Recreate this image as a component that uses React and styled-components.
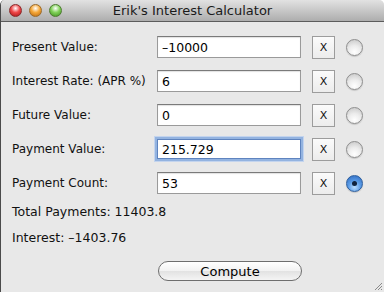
import styled, { createGlobalStyle } from "styled-components";

const GlobalStyle = createGlobalStyle`
	html, body {
		margin: 0;
		padding: 0;
		background: #ffffff;
	}
	body {
		font-family: "DejaVu Sans", "Liberation Sans", sans-serif;
	}
`;

const Window = styled.div`
	width: 384px;
	height: 292px;
	display: flex;
	flex-direction: column;
	background: #e8e8e8;
	border-radius: 5px 5px 0 0;
	overflow: hidden;
	box-sizing: border-box;
	border-left: 1px solid #4a4a4a;
	position: relative;
`;

const TitleBar = styled.div`
	height: 21px;
	flex: none;
	display: flex;
	align-items: center;
	padding-left: 8px;
	background: linear-gradient(#e2e2e2, #adadad);
	border-bottom: 1px solid #5c5c5c;
	position: relative;
`;

const Light = styled.span`
	width: 13px;
	height: 13px;
	border-radius: 50%;
	margin-right: 7px;
	box-sizing: border-box;
	border: 1px solid ${({ edge }) => edge};
	background: radial-gradient(circle at 50% 30%, #ffffff 0, ${({ hue }) => hue} 45%, ${({ deep }) => deep} 100%);
`;

const Title = styled.div`
	position: absolute;
	left: 0;
	right: 0;
	top: 0;
	height: 21px;
	line-height: 21px;
	text-align: center;
	font-size: 13px;
	color: #1a1a1a;
	pointer-events: none;
`;

const Content = styled.div`
	flex: 1;
	display: flex;
	flex-direction: column;
	padding: 14px 0 0 11px;
`;

const Rows = styled.div`
	display: flex;
	flex-direction: column;
	gap: 12px;
`;

const Row = styled.div`
	display: flex;
	align-items: center;
	height: 22px;
`;

const Label = styled.div`
	width: 145px;
	font-size: 12px;
	color: #111;
`;

const Field = styled.div`
	width: 144px;
	height: ${({ focused }) => (focused ? "20px" : "22px")};
	box-sizing: border-box;
	background: #ffffff;
	border: 1px solid ${({ focused }) => (focused ? "#5f84bf" : "#9a9a9a")};
	border-top-color: ${({ focused }) => (focused ? "#5f84bf" : "#7a7a7a")};
	box-shadow: ${({ focused }) =>
		focused ? "0 0 0 2px #93b3e0, 0 0 0 3px #c3d4ee" : "inset 0 1px 1px rgba(0,0,0,0.12)"};
	margin: ${({ focused }) => (focused ? "1px 0" : "0")};
	font-size: 12.5px;
	color: #000;
	display: flex;
	align-items: center;
	padding-left: 4px;
`;

const ClearButton = styled.div`
	width: 23px;
	height: 23px;
	margin-left: 11px;
	box-sizing: border-box;
	border: 1px solid #9c9c9c;
	background: linear-gradient(#fbfbfb, #ececec);
	display: flex;
	align-items: center;
	justify-content: center;
	font-size: 11px;
	color: #111;
`;

const Radio = styled.span`
	width: 17px;
	height: 17px;
	margin-left: 11px;
	border-radius: 50%;
	box-sizing: border-box;
	display: flex;
	align-items: center;
	justify-content: center;
	border: 1px solid ${({ checked }) => (checked ? "#2c5d9c" : "#8e8e8e")};
	background: ${({ checked }) =>
		checked
			? "radial-gradient(circle at 50% 75%, #b9ddff 0, #5b9ce6 45%, #2a67bf 100%)"
			: "radial-gradient(circle at 50% 80%, #ffffff 0, #ececec 45%, #c4c4c4 100%)"};
	box-shadow: 0 1px 1px rgba(0, 0, 0, 0.15);
`;

const Dot = styled.span`
	width: 5px;
	height: 5px;
	border-radius: 50%;
	background: #10233d;
`;

const Summary = styled.div`
	font-size: 12.5px;
	color: #111;
	height: 16px;
	line-height: 16px;
	margin-top: ${({ gap }) => gap}px;
`;

const ButtonRow = styled.div`
	display: flex;
	padding-left: 146px;
	margin-top: 15px;
`;

const Compute = styled.div`
	width: 144px;
	height: 20px;
	box-sizing: border-box;
	border: 1px solid #6e6e6e;
	border-radius: 10px;
	background: linear-gradient(#ffffff, #f2f2f2 50%, #e2e2e2 51%, #f4f4f4);
	display: flex;
	align-items: center;
	justify-content: center;
	font-size: 13px;
	color: #000;
`;

const Grip = styled.svg`
	position: absolute;
	right: 1px;
	bottom: 1px;
`;

const fields = [
	{ label: "Present Value:", value: "\u201310000" },
	{ label: "Interest Rate: (APR %)", value: "6" },
	{ label: "Future Value:", value: "0" },
	{ label: "Payment Value:", value: "215.729", focused: true },
	{ label: "Payment Count:", value: "53", checked: true },
];

export default function App() {
	return (
		<>
			<GlobalStyle />
			<Window>
				<TitleBar>
					<Light hue="#f0494a" deep="#a41214" edge="#8a2a2a" />
					<Light hue="#f6a93a" deep="#b8650e" edge="#9a6a2a" />
					<Light hue="#82d25a" deep="#3d8f1e" edge="#4d7a30" />
					<Title>Erik's Interest Calculator</Title>
				</TitleBar>
				<Content>
					<Rows>
						{fields.map((f) => (
							<Row key={f.label}>
								<Label>{f.label}</Label>
								<Field focused={f.focused}>{f.value}</Field>
								<ClearButton>X</ClearButton>
								<Radio checked={f.checked}>{f.checked && <Dot />}</Radio>
							</Row>
						))}
					</Rows>
					<Summary gap={10}>Total Payments: 11403.8</Summary>
					<Summary gap={10}>Interest: {"\u2013"}1403.76</Summary>
					<ButtonRow>
						<Compute>Compute</Compute>
					</ButtonRow>
				</Content>
				<Grip width="9" height="9" viewBox="0 0 9 9">
					<path d="M8 1 L1 8 M8 4 L4 8 M8 7 L7 8" stroke="#8a8a8a" strokeWidth="1" />
				</Grip>
			</Window>
		</>
	);
}
